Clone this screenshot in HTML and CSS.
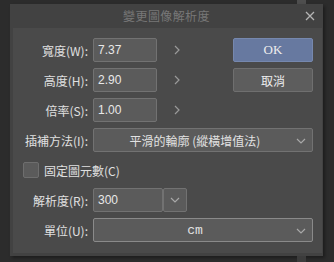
FILE: index.html
```html
<!DOCTYPE html>
<html>
<head>
<meta charset="utf-8">
<link rel="stylesheet" href="styles.css">
</head>
<body>
<div class="bgbar bgbar-top"></div>
<div class="dialog">
  <div class="titlebar">
    <span class="title">變更圖像解析度</span>
    <svg class="close" width="10" height="10" viewBox="0 0 10 10"><path d="M1 1L9 9M9 1L1 9" stroke="#b4b4b4" stroke-width="1.3" fill="none"/></svg>
  </div>
  <div class="panel">
    <div class="grid">
      <label class="lbl">寬度(W):</label>
      <div class="field">7.37</div>
      <div class="arrow"><svg width="6" height="10" viewBox="0 0 6 10"><path d="M1 1L5 5L1 9" stroke="#9a9a9a" stroke-width="1.2" fill="none"/></svg></div>
      <div class="btn btn-ok">OK</div>

      <label class="lbl">高度(H):</label>
      <div class="field">2.90</div>
      <div class="arrow"><svg width="6" height="10" viewBox="0 0 6 10"><path d="M1 1L5 5L1 9" stroke="#9a9a9a" stroke-width="1.2" fill="none"/></svg></div>
      <div class="btn">取消</div>

      <label class="lbl">倍率(S):</label>
      <div class="field">1.00</div>
      <div class="arrow"><svg width="6" height="10" viewBox="0 0 6 10"><path d="M1 1L5 5L1 9" stroke="#9a9a9a" stroke-width="1.2" fill="none"/></svg></div>
      <div></div>

      <label class="lbl">插補方法(I):</label>
      <div class="select span3">
        <span class="sel-text">平滑的輪廓 (縱橫增值法)</span>
        <svg class="chev" width="10" height="6" viewBox="0 0 10 6"><path d="M1 1L5 5L9 1" stroke="#a8a8a8" stroke-width="1.2" fill="none"/></svg>
      </div>

      <div class="checkrow span4">
        <span class="checkbox"></span>
        <span class="checklabel">固定圖元數(C)</span>
      </div>

      <label class="lbl">解析度(R):</label>
      <div class="resrow span3">
        <div class="field field-res">300</div>
        <div class="dropbtn"><svg width="10" height="6" viewBox="0 0 10 6"><path d="M1 1L5 5L9 1" stroke="#a8a8a8" stroke-width="1.2" fill="none"/></svg></div>
      </div>

      <label class="lbl">單位(U):</label>
      <div class="select select-unit span3">
        <span class="sel-text">cm</span>
        <svg class="chev" width="10" height="6" viewBox="0 0 10 6"><path d="M1 1L5 5L9 1" stroke="#a8a8a8" stroke-width="1.2" fill="none"/></svg>
      </div>
    </div>
  </div>
</div>
<div class="bgbar bgbar-bottom"></div>
</body>
</html>
```
FILE: styles.css
```css
html, body {
  margin: 0;
  padding: 0;
}
body {
  width: 334px;
  height: 262px;
  background: #2c2c2c;
  position: relative;
  overflow: hidden;
  font-family: "Noto Sans CJK TC", "Liberation Sans", sans-serif;
  font-size: 12px;
  color: #e2e2e2;
}
.bgbar {
  position: absolute;
  left: 297px;
  width: 9px;
  background: #4e4e4e;
}
.bgbar-top { top: 0; height: 4px; }
.bgbar-bottom { top: 256px; height: 6px; background: #3c3c3c; }
.dialog {
  position: absolute;
  left: 10px;
  top: 4px;
  width: 313px;
  height: 252px;
  background: #424242;
  box-shadow: 2px 2px 3px rgba(0,0,0,0.35);
  display: flex;
  flex-direction: column;
}
.titlebar {
  height: 24px;
  display: flex;
  align-items: center;
  justify-content: center;
  position: relative;
}
.title {
  color: #777777;
  font-size: 12px;
  letter-spacing: 0.4px;
  line-height: 1;
}
.close {
  position: absolute;
  right: 8px;
  top: 7px;
}
.panel {
  margin: 0 1px 3px 3px;
  flex: 1;
  background: #4a4a4a;
  padding: 10px 0 0 0;
}
.grid {
  display: grid;
  grid-template-columns: 80px 64px 76px 80px;
  column-gap: 0;
  row-gap: 6px;
  grid-auto-rows: 24px;
}
.lbl {
  padding-right: 5px;
  display: flex;
  align-items: center;
  justify-content: flex-end;
  white-space: nowrap;
  color: #e0e0e0;
}
.field {
  box-sizing: border-box;
  background: #5b5b5b;
  border: 1px solid #727272;
  border-radius: 2px;
  padding-left: 4px;
  display: flex;
  align-items: center;
  font-size: 12px;
  color: #e8e8e8;
  font-family: "Liberation Sans", sans-serif;
}
.arrow {
  display: flex;
  align-items: center;
  padding-left: 17px;
}
.btn {
  box-sizing: border-box;
  background: #5d5d5d;
  border: 1px solid #6f6f6f;
  border-radius: 2px;
  display: flex;
  align-items: center;
  justify-content: center;
  color: #eeeeee;
}
.btn-ok {
  background: #6779a0;
  border-color: #7688ae;
  font-family: "Liberation Serif", serif;
  font-size: 13px;
}
.span3 { grid-column: span 3; }
.span4 { grid-column: span 4; }
.select {
  box-sizing: border-box;
  background: #5b5b5b;
  border: 1px solid #727272;
  border-radius: 2px;
  display: flex;
  align-items: center;
  position: relative;
  padding-right: 16px;
}
.select-unit {
  border-color: #8a8a8a;
}
.sel-text {
  flex: 1;
  text-align: center;
  white-space: nowrap;
}
.select-unit .sel-text {
  font-family: "Liberation Mono", monospace;
  font-size: 13px;
}
.chev {
  position: absolute;
  right: 6px;
  top: 9px;
}
.checkrow {
  display: flex;
  align-items: center;
  padding-left: 10px;
}
.checkbox {
  box-sizing: border-box;
  width: 16px;
  height: 16px;
  background: #5b5b5b;
  border: 1px solid #6e6e6e;
  border-radius: 2px;
}
.checklabel {
  margin-left: 5px;
  color: #e0e0e0;
}
.resrow {
  display: flex;
}
.field-res {
  width: 70px;
  height: 24px;
}
.dropbtn {
  box-sizing: border-box;
  width: 24px;
  height: 24px;
  background: #5b5b5b;
  border: 1px solid #727272;
  border-radius: 2px;
  display: flex;
  align-items: center;
  justify-content: center;
}
```
